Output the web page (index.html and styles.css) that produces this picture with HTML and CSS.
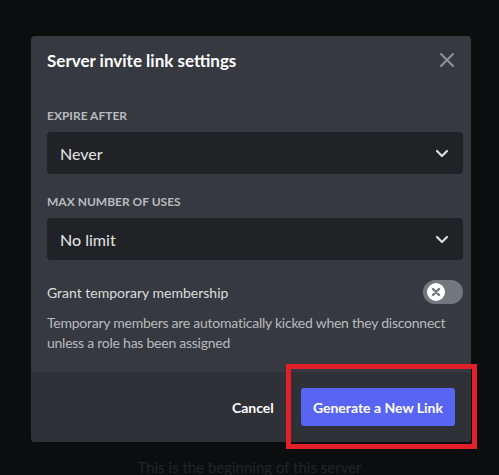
FILE: index.html
```html
<!DOCTYPE html>
<html lang="en">
<head>
    <meta charset="UTF-8">
    <meta name="viewport" content="width=device-width, initial-scale=1.0">
    <title>Server invite link settings</title>
    <link rel="stylesheet" href="styles.css">
</head>
<body>
    <div class="app">
        <div class="channel-start">
            <p class="welcome-sub">This is the beginning of this server</p>
        </div>
    </div>

    <div class="modal">
        <div class="modal-header">
            <h1 class="modal-title">Server invite link settings</h1>
            <button class="close-btn" aria-label="Close">
                <svg width="16" height="16" viewBox="0 0 16 16">
                    <path d="M2 2 L14 14 M14 2 L2 14" stroke="currentColor" stroke-width="2" stroke-linecap="round"/>
                </svg>
            </button>
        </div>

        <div class="modal-body">
            <div class="field-label">Expire after</div>
            <div class="select">
                <span>Never</span>
                <svg class="chevron" width="14" height="9" viewBox="0 0 14 9">
                    <path d="M2 2 L7 7 L12 2" fill="none" stroke="currentColor" stroke-width="2.2" stroke-linecap="round" stroke-linejoin="round"/>
                </svg>
            </div>

            <div class="field-label">Max number of uses</div>
            <div class="select">
                <span>No limit</span>
                <svg class="chevron" width="14" height="9" viewBox="0 0 14 9">
                    <path d="M2 2 L7 7 L12 2" fill="none" stroke="currentColor" stroke-width="2.2" stroke-linecap="round" stroke-linejoin="round"/>
                </svg>
            </div>

            <div class="switch-row">
                <span class="switch-label">Grant temporary membership</span>
                <div class="switch">
                    <div class="knob">
                        <svg width="10" height="10" viewBox="0 0 10 10">
                            <path d="M2 2 L8 8 M8 2 L2 8" stroke="currentColor" stroke-width="2.4" stroke-linecap="round"/>
                        </svg>
                    </div>
                </div>
            </div>
            <p class="hint">Temporary members are automatically kicked when they disconnect unless a role has been assigned</p>
        </div>

        <div class="modal-footer">
            <button class="btn-link">Cancel</button>
            <button class="btn-primary">Generate a New Link</button>
        </div>
    </div>

    <!-- highlight around the generate button -->
    <div class="highlight"></div>
</body>
</html>
```

FILE: styles.css
```css
* {
    box-sizing: border-box;
}
body {
    margin: 0;
    background-color: #0c0d0f;
    font-family: Lato, "Noto Sans", sans-serif;
    overflow: hidden;
}
.app {
    height: 475px;
    display: flex;
    flex-direction: column;
    justify-content: flex-end;
    align-items: center;
    overflow: hidden;
}
.channel-start {
    text-align: center;
    margin-bottom: -2px;
}
.welcome-sub {
    margin: 0;
    font-size: 15px;
    line-height: 20px;
    color: #232427;
}

.modal {
    position: absolute;
    left: 31px;
    top: 36px;
    width: 440px;
    background-color: #36393f;
    border-radius: 4px;
    overflow: hidden;
    color: #dcddde;
}
.modal-header {
    display: flex;
    justify-content: space-between;
    align-items: center;
    padding: 14px 16px 0;
}
.modal-title {
    margin: 0;
    font-size: 17px;
    line-height: 22px;
    font-weight: 700;
    color: #ffffff;
}
.close-btn {
    display: flex;
    background: none;
    border: none;
    padding: 0;
    margin-top: -2px;
    color: #8e9297;
    cursor: pointer;
}
.modal-body {
    padding: 36px 8px 19px 16px;
}
.field-label {
    font-size: 12px;
    line-height: 16px;
    font-weight: 700;
    text-transform: uppercase;
    color: #b9bbbe;
    margin-bottom: 8px;
}
.select {
    height: 42px;
    display: flex;
    align-items: center;
    justify-content: space-between;
    padding: 0 14px 0 13px;
    background-color: #202225;
    border-radius: 4px;
    font-size: 16px;
    font-weight: 500;
    color: #dcddde;
    margin-bottom: 20px;
}
.chevron {
    color: #dcddde;
}
.switch-row {
    display: flex;
    justify-content: space-between;
    align-items: center;
}
.switch-label {
    font-size: 14px;
    color: #dcddde;
}
.switch {
    width: 40px;
    height: 24px;
    border-radius: 12px;
    background-color: #72767d;
    padding: 3px 0 0 4px;
}
.knob {
    width: 18px;
    height: 18px;
    border-radius: 50%;
    background-color: #ffffff;
    color: #72767d;
    display: flex;
    align-items: center;
    justify-content: center;
}
.hint {
    margin: 9px 0 0;
    font-size: 14px;
    line-height: 20px;
    letter-spacing: -0.25px;
    color: #b9bbbe;
}
.modal-footer {
    height: 70px;
    display: flex;
    justify-content: flex-end;
    align-items: center;
    padding: 0 16px;
    background-color: #2f3136;
}
.btn-link {
    min-width: 96px;
    height: 38px;
    padding: 2px 16px;
    background: none;
    border: none;
    font-family: inherit;
    font-size: 14px;
    font-weight: 700;
    color: #ffffff;
    cursor: pointer;
}
.btn-primary {
    height: 38px;
    padding: 2px 12px;
    background-color: #5865f2;
    border: none;
    border-radius: 3px;
    font-family: inherit;
    font-size: 14px;
    font-weight: 700;
    color: #ffffff;
    cursor: pointer;
}
.highlight {
    position: absolute;
    left: 286px;
    top: 364px;
    width: 191px;
    height: 85px;
    border: 5px solid #e3202a;
}
```
